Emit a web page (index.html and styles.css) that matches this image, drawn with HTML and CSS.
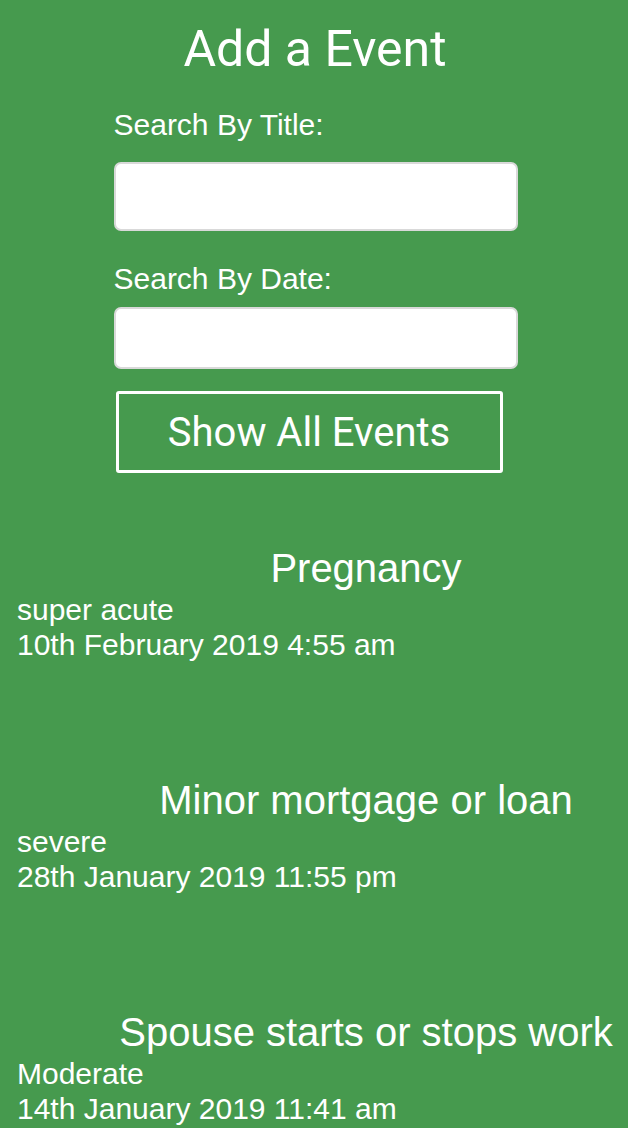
FILE: index.html
```html
<!DOCTYPE html>
<html>
<head>
<meta charset="utf-8">
<link rel="stylesheet" href="styles.css">
</head>
<body>
<div class="page">
  <h1 class="heading">Add a Event</h1>
  <form class="search">
    <label class="label label-title">Search By Title:</label>
    <input class="field field-title" type="text">
    <label class="label label-date">Search By Date:</label>
    <input class="field field-date" type="text">
    <button class="show-all" type="button">Show All Events</button>
  </form>
  <ul class="events">
    <li class="event">
      <h2 class="event-title">Pregnancy</h2>
      <div class="event-sev">super acute</div>
      <div class="event-date">10th February 2019 4:55 am</div>
    </li>
    <li class="event">
      <h2 class="event-title">Minor mortgage or loan</h2>
      <div class="event-sev">severe</div>
      <div class="event-date">28th January 2019 11:55 pm</div>
    </li>
    <li class="event">
      <h2 class="event-title">Spouse starts or stops work</h2>
      <div class="event-sev">Moderate</div>
      <div class="event-date">14th January 2019 11:41 am</div>
    </li>
  </ul>
</div>
</body>
</html>
```
FILE: styles.css
```css
html, body {
  margin: 0;
  padding: 0;
  background: #469a4e;
}
body {
  color: #fff;
  font-family: "Liberation Sans", Arial, sans-serif;
}
.page {
  padding: 0 0 0 17px;
}
.heading {
  font-family: Roboto, sans-serif;
  font-weight: 400;
  font-size: 50px;
  text-align: center;
  margin: 20px 0 0 0;
  padding-right: 15px;
  line-height: 58px;
}
.search {
  width: 404px;
  margin: 0 auto;
  display: flex;
  flex-direction: column;
  position: relative;
  left: -7px;
}
.label {
  font-size: 30px;
  line-height: 36px;
}
.label-title {
  margin-top: 29px;
}
.label-date {
  margin-top: 30px;
}
.field {
  box-sizing: border-box;
  width: 404px;
  border: 2px solid #d9d9d9;
  border-radius: 7px;
  background: #fff;
}
.field-title {
  height: 69px;
  margin-top: 19px;
}
.field-date {
  height: 62px;
  margin-top: 10px;
}
.show-all {
  box-sizing: border-box;
  align-self: flex-start;
  margin: 22px 0 0 2px;
  width: 387px;
  height: 82px;
  background: transparent;
  border: 3px solid #fff;
  border-radius: 3px;
  color: #fff;
  font-family: Roboto, sans-serif;
  font-size: 40px;
}
.events {
  list-style: none;
  margin: 71px 0 0 0;
  padding: 0;
  display: flex;
  flex-direction: column;
  gap: 114px;
}
.event-title {
  font-weight: 400;
  font-size: 40px;
  line-height: 48px;
  margin: 0;
  padding-left: 87px;
  text-align: center;
}
.event-sev, .event-date {
  font-size: 30px;
  line-height: 35px;
}
```
